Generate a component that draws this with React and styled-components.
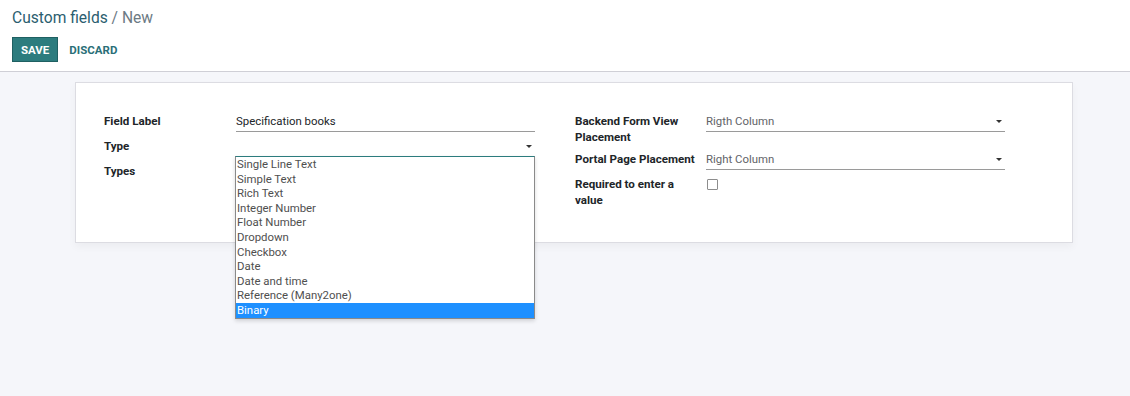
import React from 'react';
import styled, {createGlobalStyle} from 'styled-components';

const GlobalStyle = createGlobalStyle`
    html, body {
        margin: 0;
        padding: 0;
        background: #f5f6fa;
        font-family: Roboto, 'Liberation Sans', sans-serif;
    }
`

const Page = styled.div`
    min-height: 396px;
    background: #f5f6fa;
`

const ControlPanel = styled.div`
    background: #fff;
    border-bottom: 1px solid #cfcfd6;
    height: 72px;
    padding: 8px 12px 0;
    box-sizing: border-box;
`

const Breadcrumb = styled.div`
    font-size: 15.6px;
    line-height: 20px;
    color: #2b5e6f;

    span {
        color: #6c7a84;
    }
`

const Buttons = styled.div`
    display: flex;
    align-items: center;
    gap: 2px;
    margin-top: 9px;
`

const Button = styled.button`
    font-family: inherit;
    font-size: 11.5px;
    font-weight: 700;
    text-transform: uppercase;
    height: 25px;
    padding: 0 8px;
    border-radius: 0;
    cursor: pointer;
    border: 1px solid ${p => p.primary ? '#1f6062' : 'transparent'};
    background: ${p => p.primary ? '#2c7c7e' : 'transparent'};
    color: ${p => p.primary ? '#fff' : '#2a6f78'};
`

const Sheet = styled.div`
    margin: 10px 0 0 75px;
    width: 998px;
    height: 161px;
    box-sizing: border-box;
    background: #fff;
    border: 1px solid #dcdce2;
    box-shadow: 0 4px 8px rgba(0, 0, 0, 0.04);
    padding: 30px 0 0 28px;
    display: flex;
    gap: 40px;
`

const Group = styled.div`
    display: grid;
    grid-template-columns: ${p => p.labelWidth}px 299px;
    row-gap: 6px;
    align-items: start;
    align-content: start;
`

const Label = styled.div`
    font-size: 11.6px;
    font-weight: 700;
    line-height: 16px;
    color: #212529;
    padding-right: 4px;
`

const Field = styled.div`
    position: relative;
    height: 19px;
    box-sizing: border-box;
    line-height: 16px;
    font-size: 11.4px;
    color: ${p => p.muted ? '#5f6368' : '#212529'};
    border-bottom: 1px solid ${p => p.focused ? '#2c7c7e' : p.empty ? 'transparent' : '#9a9a9a'};
    display: flex;
    justify-content: space-between;
`

const Caret = styled.i`
    width: 0;
    height: 0;
    margin: 7px 3px 0 0;
    border-left: 3px solid transparent;
    border-right: 3px solid transparent;
    border-top: 3px solid #333;
`

const Checkbox = styled.span`
    display: block;
    width: 11px;
    height: 11px;
    margin: 3px 0 0 1px;
    box-sizing: border-box;
    border: 1px solid #8d8d8d;
    border-radius: 1px;
`

const ListBox = styled.ul`
    position: absolute;
    top: 100%;
    left: -1px;
    width: 300px;
    box-sizing: border-box;
    margin: 0;
    padding: 0;
    list-style: none;
    background: #fff;
    border: 1px solid #8a8a8a;
    border-top: 1px solid #2c7c7e;
    box-shadow: 0 2px 4px rgba(0, 0, 0, 0.15);
    z-index: 5;
`

const Option = styled.li`
    height: 14.6px;
    line-height: 14.6px;
    padding: 0 1px;
    font-size: 11.4px;
    color: ${p => p.selected ? '#fff' : '#4f4f4f'};
    background: ${p => p.selected ? '#1e90ff' : 'transparent'};
`

const types = [
    'Single Line Text',
    'Simple Text',
    'Rich Text',
    'Integer Number',
    'Float Number',
    'Dropdown',
    'Checkbox',
    'Date',
    'Date and time',
    'Reference (Many2one)',
    'Binary',
]

const App = () => {
    return (
        <Page>
            <GlobalStyle />
            <ControlPanel>
                <Breadcrumb>Custom fields <span>/ New</span></Breadcrumb>
                <Buttons>
                    <Button primary>Save</Button>
                    <Button>Discard</Button>
                </Buttons>
            </ControlPanel>
            <Sheet>
                <Group labelWidth={132}>
                    <Label>Field Label</Label>
                    <Field>Specification books</Field>
                    <Label>Type</Label>
                    <Field focused>
                        <span></span>
                        <Caret />
                        <ListBox>
                            {types.map(t => <Option key={t} selected={t === 'Binary'}>{t}</Option>)}
                        </ListBox>
                    </Field>
                    <Label>Types</Label>
                    <Field empty></Field>
                </Group>
                <Group labelWidth={131}>
                    <Label>Backend Form View<br />Placement</Label>
                    <Field muted><span>Rigth Column</span><Caret /></Field>
                    <Label>Portal Page Placement</Label>
                    <Field muted><span>Right Column</span><Caret /></Field>
                    <Label>Required to enter a<br />value</Label>
                    <Field empty><Checkbox /></Field>
                </Group>
            </Sheet>
        </Page>
    );
}

export default App;
